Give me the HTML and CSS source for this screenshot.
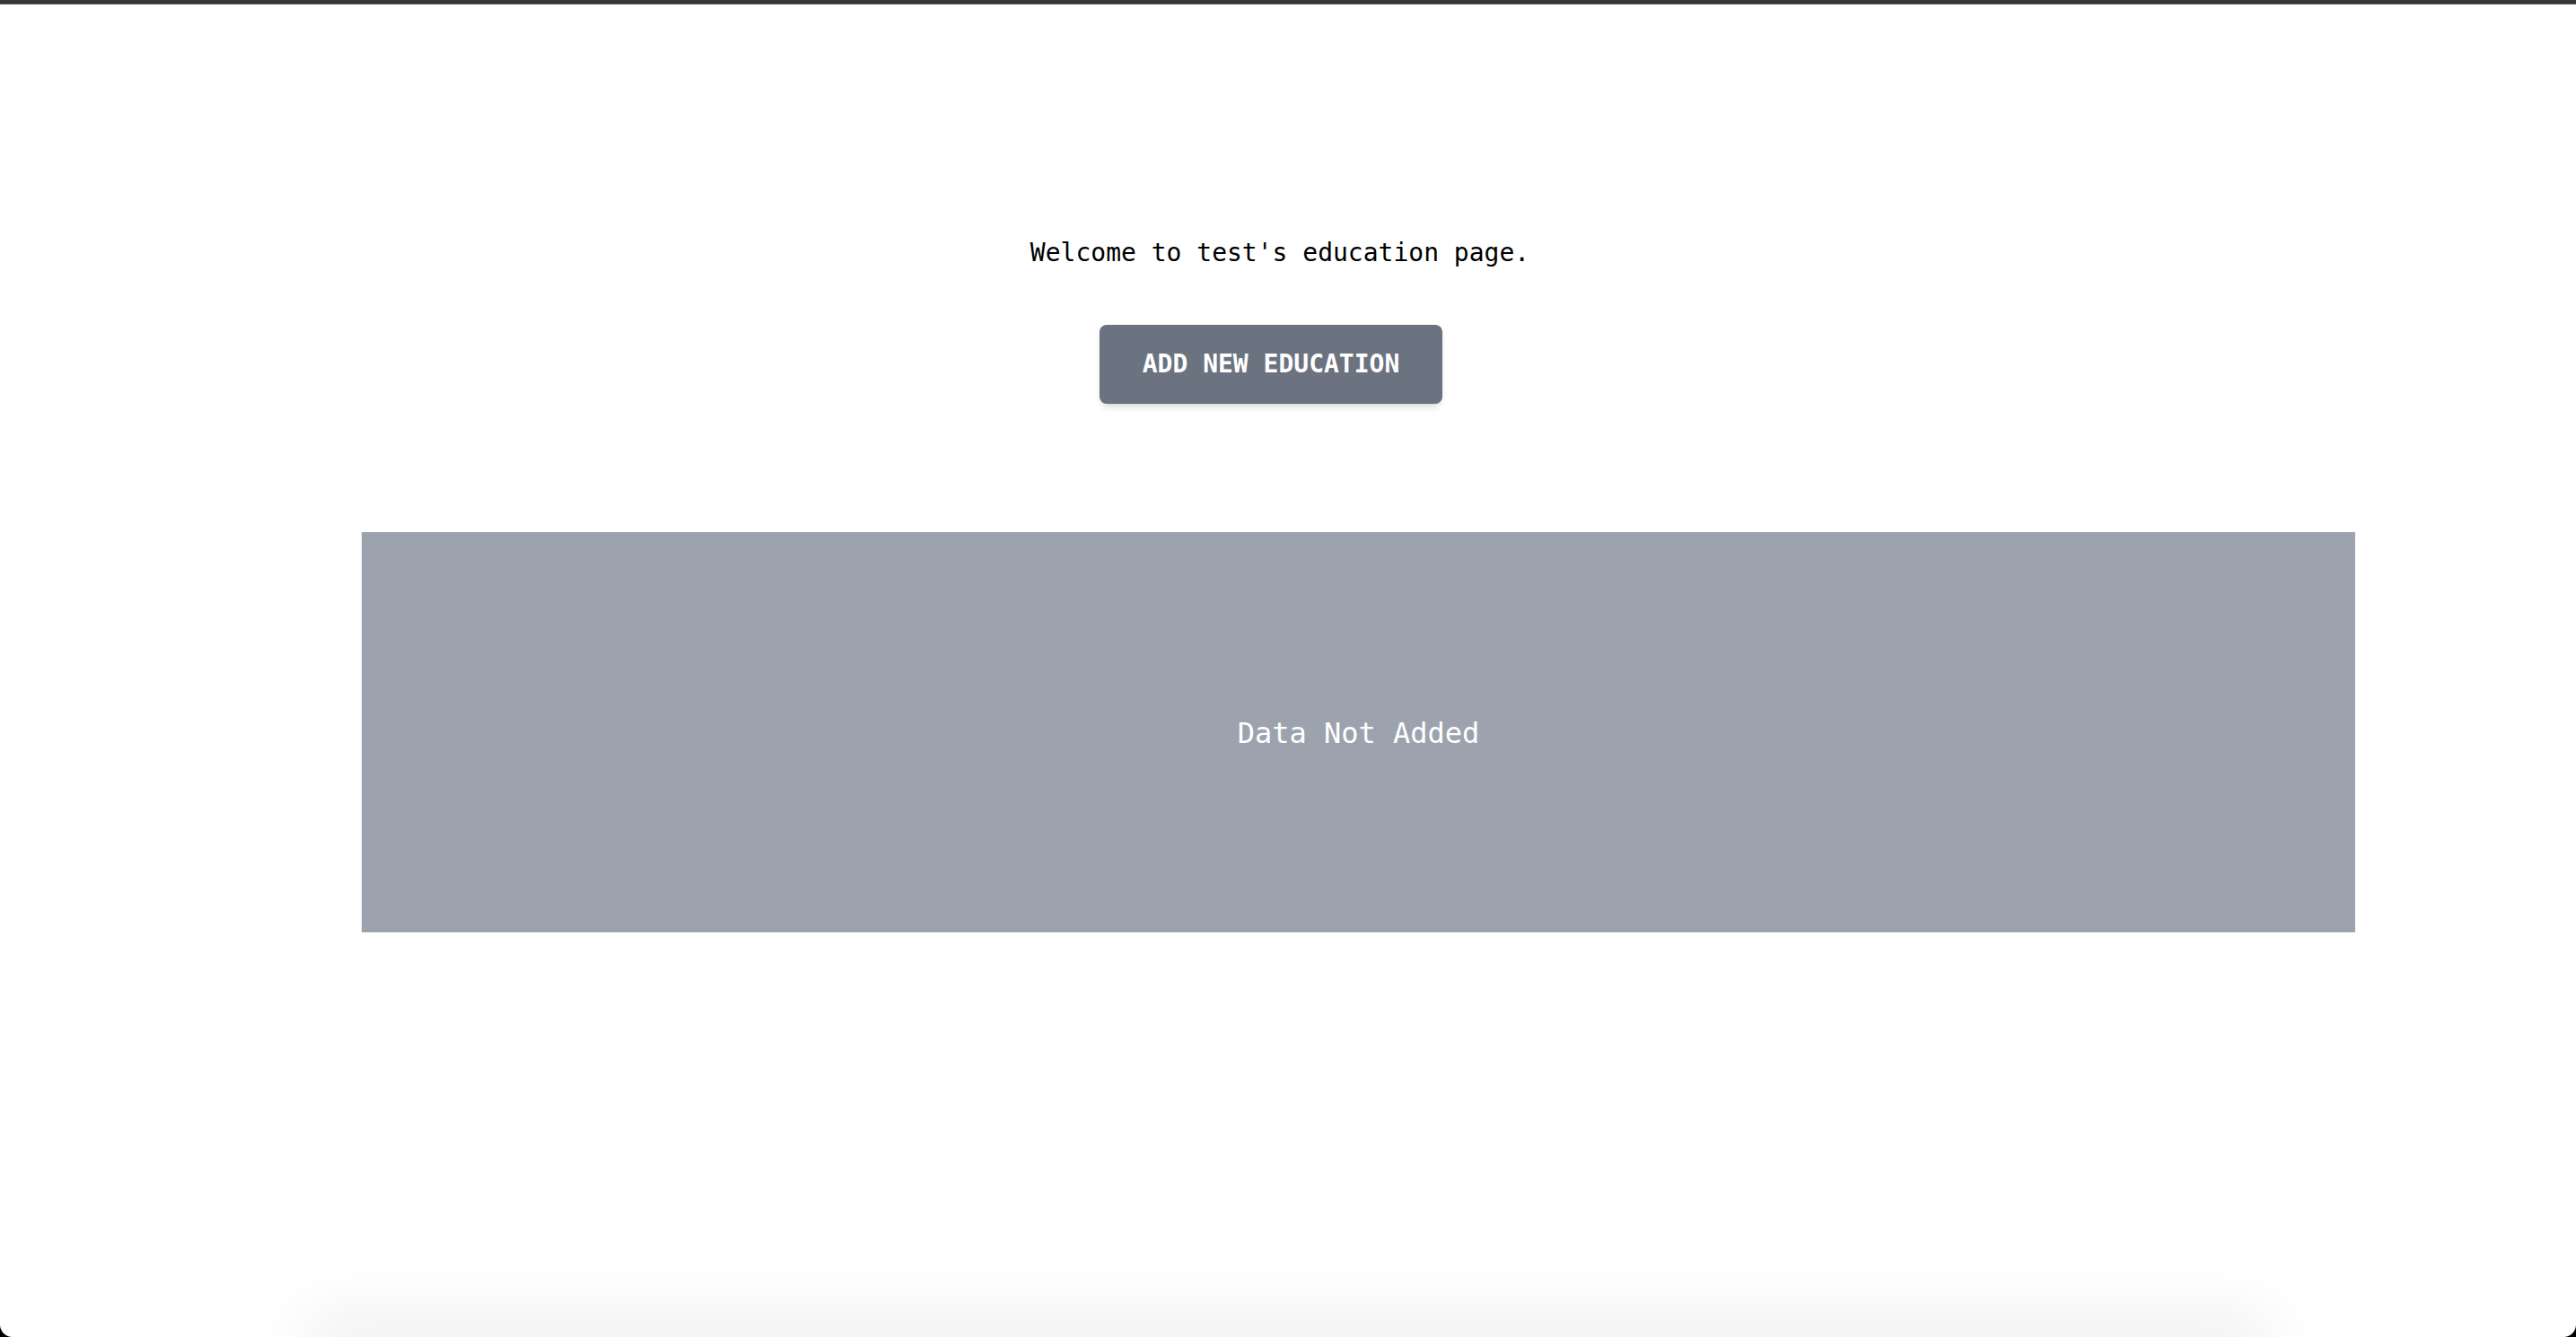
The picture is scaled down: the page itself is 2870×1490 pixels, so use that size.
FILE: index.html
```html
<!DOCTYPE html>
<html lang="en">
<head>
<meta charset="utf-8">
<title>Education</title>
<link rel="stylesheet" href="styles.css">
</head>
<body>
  <div class="topbar"></div>
  <main class="page">
    <section class="intro">
      <p class="welcome">Welcome to test's education page.</p>
      <button class="add-btn" type="button">ADD NEW EDUCATION</button>
    </section>
    <section class="empty">
      <span class="empty-text">Data Not Added</span>
    </section>
  </main>
  <footer class="footer-card"></footer>
</body>
</html>
```
FILE: styles.css
```css
html {
  background: #000;
  margin: 0;
  padding: 0;
}

body {
  margin: 0;
  height: 1490px;
  overflow: hidden;
  background: #fff;
  border-radius: 0 0 14px 14px;
  font-family: "DejaVu Sans Mono", "Liberation Mono", monospace;
  color: #000;
}

.topbar {
  height: 5px;
  background: linear-gradient(to bottom, #36363a 0, #36363a 4px, #5a5a5e 4px, #5a5a5e 5px);
}

.page {
  display: flex;
  flex-direction: column;
}

.intro {
  display: flex;
  flex-direction: column;
  align-items: center;
  padding-top: 257px;
  padding-right: 18px;
}

.welcome {
  margin: 0;
  font-size: 28px;
  line-height: 40px;
}

.add-btn {
  margin: 60px 20px 0 0;
  padding: 24px 48px;
  border: 0;
  border-radius: 8px;
  background: #6b7280;
  color: #fff;
  font-family: "DejaVu Sans Mono", "Liberation Mono", monospace;
  font-weight: bold;
  font-size: 28px;
  line-height: 40px;
  box-shadow: 0 6px 10px -3px rgba(0, 0, 0, 0.14), 0 2px 4px -2px rgba(0, 0, 0, 0.08);
  cursor: pointer;
}

.empty {
  margin-top: 143px;
  margin-left: 403px;
  width: 2221px;
  height: 446px;
  background: #9ca3af;
  display: flex;
  align-items: center;
  justify-content: center;
}

.empty-text {
  color: #fff;
  font-size: 32px;
  line-height: 44px;
  padding-top: 2px;
}

.footer-card {
  margin-top: 451px;
  margin-left: 350px;
  width: 2170px;
  height: 0;
  box-shadow: 0 0 70px 10px rgba(0, 0, 0, 0.18);
}
```
